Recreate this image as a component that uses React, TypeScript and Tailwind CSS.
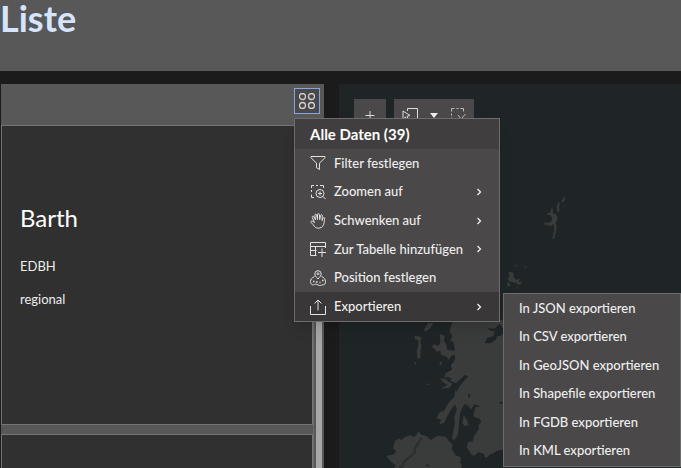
import React, { useState } from 'react';

interface IconProps {
  children: React.ReactNode;
}

const Icon: React.FC<IconProps> = ({ children }) => (
  <svg className="w-4 h-4 shrink-0" viewBox="0 0 16 16" fill="none" stroke="#e2e2e2" aria-hidden="true">
    {children}
  </svg>
);

const FilterIcon = () => (
  <Icon>
    <path d="M1 1.500h14v1.200L9.500 8.200v6.300l-3-1.800V8.200L1 2.700z" />
  </Icon>
);

const ZoomIcon = () => (
  <Icon>
    <path d="M1.500 4V1.500H4M6 1.500h2M10 1.500h3.500V4M1.500 6v2M1.500 10.500v3H4" />
    <circle cx="10" cy="9.500" r="4" />
    <path d="M13 12.500l2.500 2.500M8 9.500h4M10 7.500v4" />
  </Icon>
);

const HandIcon = () => (
  <Icon>
    <path d="M4.500 9.500L2.300 4.600c-.5-1.300 1-2 1.600-.8L5.600 7 4.800 2.400c-.2-1.300 1.500-1.600 1.800-.4L7.500 6.500V1.600c0-1.300 1.800-1.300 1.900 0l.3 5 .9-4.200c.3-1.200 1.900-.9 1.700.4L12 7.600l1.100-2.500c.5-1.100 1.900-.5 1.600.6-.5 2.100-.5 5.800-2 7.600-1.500 2.100-6 2.600-8 .4-1-1.200-2-3-3.600-4.200-.7-.7.1-1.800 1.200-1.400z" />
  </Icon>
);

const TableAddIcon = () => (
  <Icon>
    <path d="M15.500 7V1.500H.5v13h6M.5 5.500h15M.5 9.500h6M5.500 5.500v9M8 11.500h8M12 7.500v8.500" />
  </Icon>
);

const LocationIcon = () => (
  <Icon>
    <path d="M8 9C6 6.800 4.800 5.500 4.800 3.900a3.200 3.200 0 0 1 6.400 0C11.200 5.500 10 6.800 8 9z" />
    <circle cx="8" cy="3.800" r="1" />
    <path d="M4.500 6.500C2 7.500.5 9.500.5 11.500c0 3 2.200 4 4 3 1.500-.8 2-.3 3.500.5 2 1 3 .3 4.500-.2 2 .5 3-1 3-3.300 0-2.200-1.500-4-4-5" />
    <path d="M3 11.500h1.500M6 12h1.500M9.500 12.500h1M12 10.500h1.500" strokeWidth="1.500" />
  </Icon>
);

const ExportIcon = () => (
  <Icon>
    <path d="M.5 7v8.500h15V7M8 11.500V1M4.500 4.500L8 1l3.500 3.500" />
  </Icon>
);

const Chevron = () => (
  <svg className="w-2 h-2 shrink-0" viewBox="0 0 8 8" fill="none" stroke="#eeeeee" strokeWidth="1.300" aria-hidden="true">
    <path d="M2.500 1l3 3-3 3" />
  </svg>
);

const MENU_ITEMS = [
  { id: 'filter', label: 'Filter festlegen', icon: FilterIcon, submenu: false },
  { id: 'zoom', label: 'Zoomen auf', icon: ZoomIcon, submenu: true },
  { id: 'pan', label: 'Schwenken auf', icon: HandIcon, submenu: true },
  { id: 'table', label: 'Zur Tabelle hinzufügen', icon: TableAddIcon, submenu: true },
  { id: 'location', label: 'Position festlegen', icon: LocationIcon, submenu: false },
  { id: 'export', label: 'Exportieren', icon: ExportIcon, submenu: true },
];

const EXPORT_FORMATS = ['JSON', 'CSV', 'GeoJSON', 'Shapefile', 'FGDB', 'KML'];

const ActionMenu: React.FC = () => {
  const [active, setActive] = useState('export');

  return (
    <div className="absolute top-[30px] left-0 z-20 w-[206px] border border-[#6c6c6c] bg-[#4a4849] text-[13px] font-medium text-[#eeeeee] shadow-lg">
      <h2 className="flex h-[30px] items-center bg-[#403e3f] px-[15px] text-[15px] font-bold text-white">Alle Daten (39)</h2>
      <div className="grid h-[172px] grid-rows-6" role="menu">
        {MENU_ITEMS.map((item) => (
          <button
            key={item.id}
            role="menuitem"
            onClick={() => setActive(item.id)}
            className={`flex items-center gap-2 pr-4 pl-[15px] text-left whitespace-nowrap ${active === item.id ? 'bg-[#393737]' : 'hover:bg-[#393737]'}`}
          >
            <item.icon />
            <span className="flex-1">{item.label}</span>
            {item.submenu && <Chevron />}
          </button>
        ))}
      </div>

      {/* Export submenu, opens beside the last row */}
      {active === 'export' && (
        <div className="absolute top-[174px] left-[208px] grid h-[174px] w-[178px] grid-rows-6 border border-[#6c6c6c] bg-[#4a4849] pb-px" role="menu">
          {EXPORT_FORMATS.map((format) => (
            <button key={format} role="menuitem" className="flex items-center pl-[15px] text-left whitespace-nowrap hover:bg-[#393737]">
              In {format} exportieren
            </button>
          ))}
        </div>
      )}
    </div>
  );
};

const MapDrawing = () => (
  <svg className="absolute top-0 left-0 h-[384px] w-[342px]" viewBox="0 0 342 384" fill="#3a3c3b" aria-hidden="true">
    {/* Northern isles */}
    <g transform="translate(161 -14) scale(.3333)">
      <path d="M195 379l-1 13-9 7 1-10zM180 396l-3 15 2 12-7 3-2-14 4-13zM156 407l3 14-1 11 7-2 7 10-1 12-5 5 4 12-3 20-5 18-5-1 4-16 2-20-3-9-8 8-9-4-9-1-1-7 9 2 11-4 4-9-6-11-11-2 3-5 8 2zM190 406l5 3-3 3z" />
      <path d="M25 607l12-1 5 8-3 8 12 9 4-6 4 3-3 8 10-1-3 7-8 3-6-7-10-2-13-2-3-9 6-4zM24 636l8 8-5 7-7-8zM43 582l10 5-3 4zM73 588l7 3-4 4zM70 609l4 2-2 2zM48 650l5 3-3 3z" />
    </g>
    {/* Scotland and Northern Ireland */}
    <g transform="translate(-14 226) scale(.3333)">
      <path d="M395 30h147v395l-10-6-18 4-8 7-10 2-11 12-6-3-2-10-17-4-12 10-9-3-4-7-9-14 3-17 14-2 5-17 14-20-2-9 8-12-3-10-17-5-9-20-10-12-8-8-8 10-8 20-3 28-3 32-9 18-9-2 4-25 5-20-2-22 8-22-6-16-14 20-10 18-8 18-14 5 4-13-13-6 9-17 13-4 13-23 18-20 3-18 3-18-9-4-14 14-23 2 20-12-11-6-12-13 16 2 12 9 7-11-13-4-9 3 4-14 19-11-3-14 9-10 4-12-5-14 4-12-5-20-9-6 6-12-8-17 7-24z" />
      <path d="M344 72l15 5-2 15 7 12 2 15 20 3 9 8-17 9-6 11-7-10-17-5-3-14-9 5-8-11-7-2 5-10 15 5 5-11zM325 40l-9 14-15 12-3-9 11-18zM269 78l11 1 10 4-4 12 3 9-2 20-1 20-8 3-3-23 5-18-1-15-10-4zM267 160l7-4-1 8zM345 155l7 3-4 8-5-4zM305 224l10-5-3 7zM416 316l10 15 5 14-12 4-7-10z" />
      <path d="M200 480l13-13-17-14-12-15 23-5 7-9-10-9 6-23 15-7 3 7 11-10 17-6 11 5 10-9 2-9 10 11 16 5 13 11 20-13 25 4 10 14 10 10-3 12 12 19 16 6-6 10 7 10 2 23zM387 443l12-3 8 9-1 24-7-7 1-15z" />
      <path d="M291 383l-11 15-10 17-1 13-16 14-15 12-3 11-12 9" fill="none" stroke="#2d2f2f" strokeWidth="7" />
      <path d="M542 65l-15 13-10 0-5 11-13 10-20 1 8-17 18-4 5-15-12-1-12-8 24 0 14-14zM522 275l15 1v5h-12zM430 251l6 2-2 10-5-3zM420 195l10 4-23 25-13 22-6-19-25-20 19 8 11 4zM448 283l19 7-15 2-8 24 10 22-15-13-5-20-7-25 10 19zM300 466l8-4 8 8z" fill="#1f2527" />
    </g>
  </svg>
);

export default function App() {
  const [menuOpen, setMenuOpen] = useState(true);

  return (
    <div className="flex h-screen flex-col overflow-hidden bg-[#1b1b1b] font-['Lato','Liberation_Sans',sans-serif]">
      <header className="h-[71px] shrink-0 bg-[#585858]">
        <h1 className="text-4xl leading-9 font-bold text-[#d6e4ff]">Liste</h1>
      </header>

      <main className="flex min-h-0 flex-1 gap-[15px] pt-[13px] pl-px">
        {/* List panel */}
        <section className="flex w-[323px] shrink-0 flex-col bg-[#585858]">
          <div className="flex h-[41px] shrink-0 items-start justify-end pt-1 pr-1">
            <div className="relative">
              <button
                aria-label="Aktionen"
                onClick={() => setMenuOpen(!menuOpen)}
                className="flex h-[26px] w-[26px] items-center justify-center border border-[#84a6de] bg-[#4a4849]"
              >
                <svg className="h-4 w-4" viewBox="0 0 16 16" fill="none" stroke="#d4d4d4" strokeWidth="1.300" aria-hidden="true">
                  <circle cx="3.500" cy="3.500" r="3" />
                  <circle cx="12.500" cy="3.500" r="3" />
                  <circle cx="3.500" cy="12.500" r="3" />
                  <circle cx="12.500" cy="12.500" r="3" />
                </svg>
              </button>
              {menuOpen && <ActionMenu />}
            </div>
          </div>

          <div className="flex min-h-0 flex-1">
            <div className="flex min-w-0 flex-1 flex-col gap-[9px] overflow-hidden">
              <article className="h-[300px] shrink-0 border border-[#747474] bg-[#303030] px-[18px] pt-[76px] text-[13px] text-[#eeeeee]">
                <h2 className="text-2xl text-white">Barth</h2>
                <p className="mt-[22px] leading-5">EDBH</p>
                <p className="mt-[13px] leading-5">regional</p>
              </article>
              <article className="h-[300px] shrink-0 border border-[#747474] bg-[#303030]" />
            </div>
            <div className="w-[11px] border-l border-[#6c6c6c] px-0.5">
              <div className="h-full w-1.5 bg-[#a9a7a6]" />
            </div>
          </div>
        </section>

        {/* Map */}
        <section className="relative min-w-0 flex-1 overflow-hidden bg-[#1f2527]">
          <MapDrawing />
          <div className="relative flex gap-2 px-[15px] pt-[15px]">
            <button aria-label="Vergrößern" className="flex h-8 w-8 items-center justify-center bg-[#4a4849]">
              <svg className="h-4 w-4" viewBox="0 0 16 16" stroke="#dddddd" aria-hidden="true">
                <path d="M3.500 8.500h9M8 4v9" />
              </svg>
            </button>
            <div className="flex h-8 items-center gap-3 bg-[#4a4849] px-2">
              <button aria-label="Auswählen">
                <svg className="h-4 w-4" viewBox="0 0 16 16" fill="none" stroke="#dddddd" aria-hidden="true">
                  <path d="M5.500 4V1.500h10v10H9" />
                  <path d="M1 4l7 4.500-3 .8 2 4-1.500.7-2-4L1 12z" />
                </svg>
              </button>
              <button aria-label="Auswahlart">
                <svg className="h-2 w-2" viewBox="0 0 8 8" fill="#eeeeee" aria-hidden="true">
                  <path d="M0 2h8L4 7z" />
                </svg>
              </button>
              <button aria-label="Auswahl aufheben">
                <svg className="h-4 w-4" viewBox="0 0 16 16" fill="none" stroke="#bcbcbc" aria-hidden="true">
                  <path d="M1.500 4.500v-3h3M6.500 1.500h2M10.500 1.500h3v3M1.500 6.500v2M1.500 10.500v3h3" />
                  <path d="M8 8l3 4 4.500-5M8 15l3-3 3 3" />
                </svg>
              </button>
            </div>
          </div>
        </section>
      </main>
    </div>
  );
}
